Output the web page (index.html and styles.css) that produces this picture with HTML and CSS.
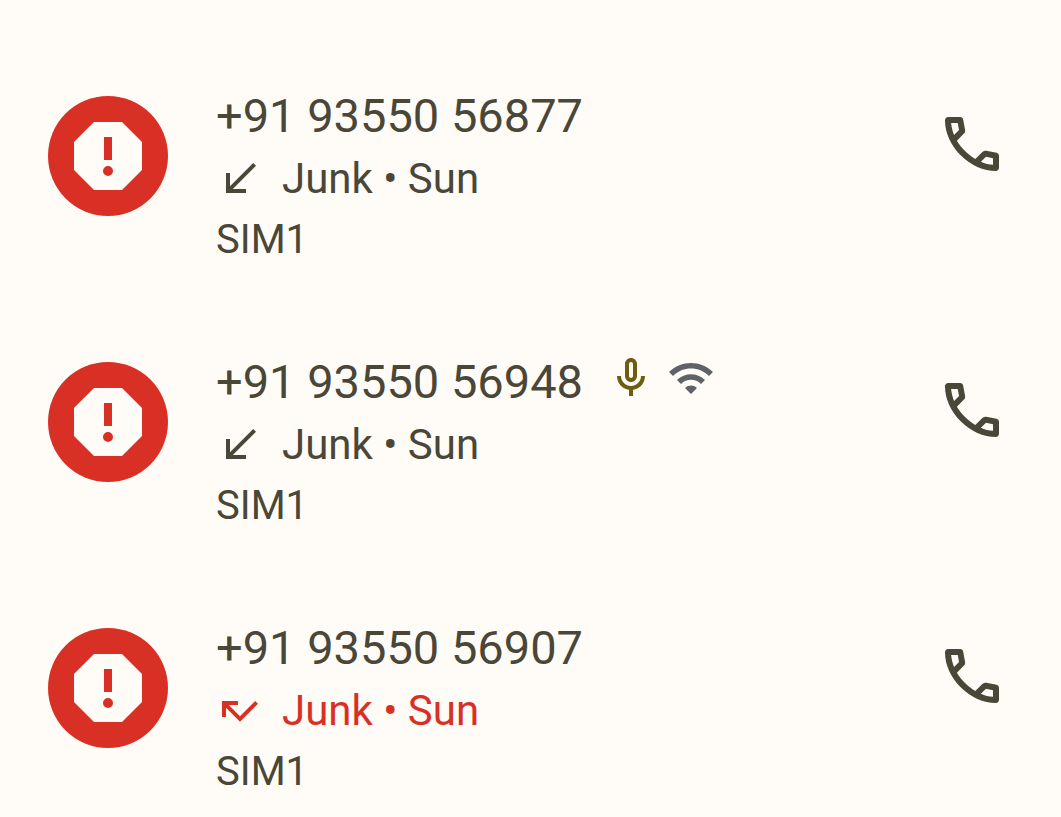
FILE: index.html
```
<!DOCTYPE html>
<html lang="en">
<head>
    <meta charset="UTF-8">
    <meta name="viewport" content="width=device-width, initial-scale=1.0">
    <title>Call history</title>
    <link rel="stylesheet" href="styles.css">
</head>
<body>

    <!-- shared icons -->
    <svg class="sprite" aria-hidden="true">
        <symbol id="icon-spam" viewBox="0 0 120 120">
            <path fill-rule="evenodd" d="M46 26H74L94 46V74L74 94H46L26 74V46ZM56 41V64H64V41ZM60 70a5 5 0 1 0 0 10a5 5 0 1 0 0-10Z"/>
        </symbol>
        <symbol id="icon-received" viewBox="0 0 24 24">
            <path d="M20 5.41L18.59 4 7 15.59V9H5v10h10v-2H8.41z"/>
        </symbol>
        <symbol id="icon-missed" viewBox="0 0 24 24">
            <path d="M19.59 7L12 14.59 6.41 9H11V7H3v8h2v-4.59l7 7 9-9z"/>
        </symbol>
        <symbol id="icon-call" viewBox="0 0 24 24">
            <path d="M19.95 21q-3.125 0-6.175-1.362-3.05-1.363-5.55-3.863t-3.863-5.55Q3 7.175 3 4.05q0-.45.3-.75t.75-.3H8.1q.35 0 .625.238.275.237.325.562l.65 3.5q.05.4-.025.675t-.275.475L6.975 10.9q.5.925 1.187 1.787.688.863 1.513 1.663.775.775 1.625 1.438.85.662 1.8 1.212l2.35-2.35q.225-.225.588-.337.362-.113.712-.063l3.45.7q.35.1.575.362.225.263.225.588v4.05q0 .45-.3.75t-.75.3ZM6.025 9l1.65-1.65L7.25 5H5.025q.125 1.025.35 2.025T6.025 9Zm8.95 8.95q.975.425 1.988.675 1.012.25 2.037.325v-2.2l-2.35-.475Z"/>
        </symbol>
        <symbol id="icon-mic" viewBox="0 0 24 24">
            <path d="M12 14c1.66 0 3-1.34 3-3V5c0-1.66-1.34-3-3-3S9 3.34 9 5v6c0 1.66 1.34 3 3 3zm-1-9c0-.55.45-1 1-1s1 .45 1 1v6c0 .55-.45 1-1 1s-1-.45-1-1V5zm6 6c0 2.76-2.24 5-5 5s-5-2.24-5-5H5c0 3.53 2.61 6.43 6 6.92V21h2v-3.08c3.39-.49 6-3.39 6-6.92h-2z"/>
        </symbol>
        <symbol id="icon-wifi" viewBox="0 0 24 24">
            <path d="M1 9l2 2c4.97-4.97 13.03-4.97 18 0l2-2C16.93 2.93 7.08 2.93 1 9zm8 8l3 3 3-3c-1.65-1.66-4.34-1.66-6 0zm-4-4l2 2c2.76-2.76 7.24-2.76 10 0l2-2C15.14 9.14 8.87 9.14 5 13z"/>
        </symbol>
    </svg>

    <ul class="call-list">
        <li class="call">
            <div class="avatar"><svg><use href="#icon-spam"/></svg></div>
            <div class="details">
                <div class="number">+91 93550 56877</div>
                <div class="status"><svg class="icon"><use href="#icon-received"/></svg><span>Junk • Sun</span></div>
                <div class="sim">SIM1</div>
            </div>
            <button class="call-button" aria-label="Call +91 93550 56877"><svg><use href="#icon-call"/></svg></button>
        </li>

        <li class="call">
            <div class="avatar"><svg><use href="#icon-spam"/></svg></div>
            <div class="details">
                <div class="number">
                    <span>+91 93550 56948</span>
                    <div class="badges">
                        <svg class="icon mic"><use href="#icon-mic"/></svg>
                        <svg class="icon wifi"><use href="#icon-wifi"/></svg>
                    </div>
                </div>
                <div class="status"><svg class="icon"><use href="#icon-received"/></svg><span>Junk • Sun</span></div>
                <div class="sim">SIM1</div>
            </div>
            <button class="call-button" aria-label="Call +91 93550 56948"><svg><use href="#icon-call"/></svg></button>
        </li>

        <li class="call">
            <div class="avatar"><svg><use href="#icon-spam"/></svg></div>
            <div class="details">
                <div class="number">+91 93550 56907</div>
                <div class="status missed"><svg class="icon"><use href="#icon-missed"/></svg><span>Junk • Sun</span></div>
                <div class="sim">SIM1</div>
            </div>
            <button class="call-button" aria-label="Call +91 93550 56907"><svg><use href="#icon-call"/></svg></button>
        </li>
    </ul>

</body>
</html>
```
FILE: styles.css
```
body {
    margin: 0;
    background-color: #fffcf7;
    color: #4a4738;
    font-family: Roboto, sans-serif;
}
svg {
    display: block;
    fill: currentColor;
}
.sprite {
    display: none;
}
.call-list {
    display: flex;
    flex-direction: column;
    gap: 78px;
    margin: 0;
    padding: 83px 53px 12px 48px;
    list-style: none;
}
.call {
    display: flex;
    align-items: flex-start;
    gap: 48px;
}

/* spam avatar */
.avatar {
    flex-shrink: 0;
    margin-top: 13px;
    border-radius: 50%;
    background-color: #d93025;
    color: #fffcf7;
}
.avatar svg {
    width: 120px;
    height: 120px;
}

/* text column */
.details {
    flex: 1;
    min-width: 0;
}
.number {
    display: flex;
    align-items: center;
    gap: 24px;
    font-size: 47px;
    line-height: 66px;
}
.status {
    display: flex;
    align-items: center;
    gap: 18px;
    font-size: 42px;
    line-height: 60px;
}
.missed {
    color: #d93025;
}
.sim {
    font-size: 40px;
    line-height: 62px;
}
.icon {
    width: 48px;
    height: 48px;
}
.badges {
    display: flex;
    gap: 12px;
    padding-bottom: 8px;
}
.mic {
    color: #6d5e0f;
}
.wifi {
    color: #5f6368;
}

.call-button {
    margin-top: 25px;
    padding: 0;
    border: none;
    background: none;
    color: inherit;
    cursor: pointer;
}
.call-button svg {
    width: 72px;
    height: 72px;
}
```
